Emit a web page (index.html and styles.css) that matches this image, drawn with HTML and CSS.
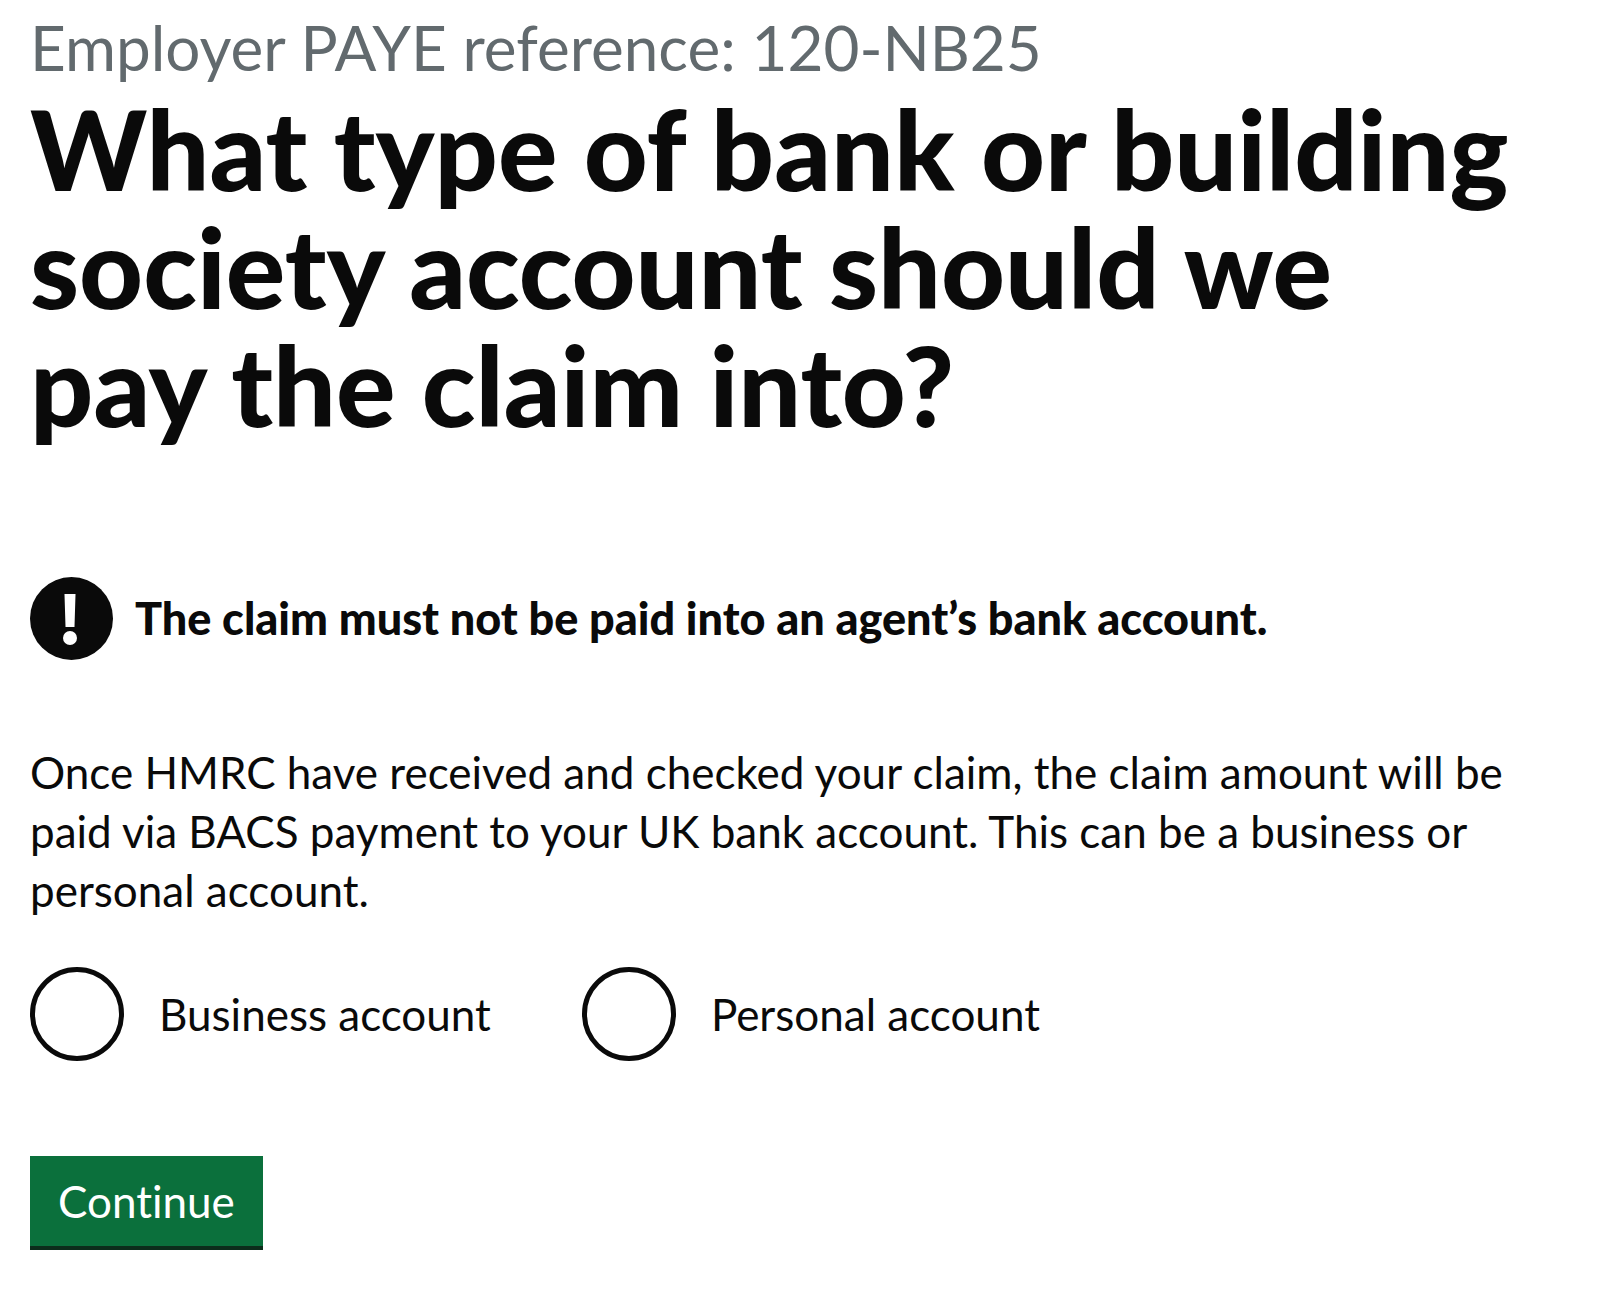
FILE: index.html
```html
<!DOCTYPE html>
<html lang="en">
<head>
<meta charset="utf-8">
<meta name="viewport" content="width=device-width, initial-scale=1">
<title>What type of bank or building society account should we pay the claim into?</title>
<link rel="stylesheet" href="styles.css">
</head>
<body>
<main class="main">
    <form class="form">
        <span class="caption">Employer PAYE reference: 120-NB25</span>
        <h1 class="heading">What type of bank or building society account should we pay the claim into?</h1>

        <div class="warning">
            <svg class="warning-icon" viewBox="0 0 83 83" aria-hidden="true">
                <circle cx="41.5" cy="41.5" r="41.5" fill="#0a0a0a"/>
                <path d="M34.5 17h11l-1 33h-9z" fill="#fff"/>
                <circle cx="40" cy="61" r="7" fill="#fff"/>
            </svg>
            <strong class="warning-text">The claim must not be paid into an agent’s bank account.</strong>
        </div>

        <p class="body-text">Once HMRC have received and checked your claim, the claim amount will be paid via BACS payment to your UK bank account. This can be a business or personal account.</p>

        <div class="radios" role="radiogroup" aria-label="Account type">
            <div class="radios-item">
                <input class="radios-input" type="radio" id="business" name="account" value="business">
                <label class="radios-label" for="business">Business account</label>
            </div>
            <div class="radios-item">
                <input class="radios-input" type="radio" id="personal" name="account" value="personal">
                <label class="radios-label" for="personal">Personal account</label>
            </div>
        </div>

        <button class="button" type="submit">Continue</button>
    </form>
</main>
</body>
</html>
```
FILE: styles.css
```css
* {
    box-sizing: border-box;
}
body {
    margin: 0;
    background: #fff;
    color: #0a0a0a;
    font-family: Lato, Arial, sans-serif;
    font-size: 44px;
    line-height: 59px;
    font-variant-ligatures: none;
}
.main {
    padding: 5px 30px 40px;
}
.form {
    max-width: 1500px;
}
.caption {
    display: block;
    color: #626a6e;
    font-size: 62px;
    line-height: 84px;
}
.heading {
    margin: 0 0 134px;
    font-size: 111px;
    font-weight: 900;
    line-height: 118px;
}
.warning {
    display: flex;
    align-items: center;
    gap: 22px;
    margin-bottom: 83px;
}
.warning-icon {
    flex: none;
    width: 83px;
    height: 83px;
}
.warning-text {
    font-size: 45px;
    font-weight: 900;
}
.body-text {
    margin: 0 0 47px;
}
.radios {
    display: flex;
    flex-wrap: wrap;
    gap: 91px;
    margin-bottom: 95px;
}
.radios-item {
    display: flex;
    align-items: center;
    gap: 35px;
}
.radios-input {
    appearance: none;
    flex: none;
    width: 94px;
    height: 94px;
    margin: 0;
    border: 5px solid #0a0a0a;
    border-radius: 50%;
    background: #fff;
}
.radios-input:checked {
    background: radial-gradient(#0a0a0a 50%, #fff 52%);
}
.button {
    display: block;
    padding: 16px 28px 15px;
    border: 0;
    border-bottom: 4px solid #0c2d1b;
    border-radius: 0;
    background: #0b703c;
    color: #fff;
    font: inherit;
    font-variant-ligatures: none;
}
```
